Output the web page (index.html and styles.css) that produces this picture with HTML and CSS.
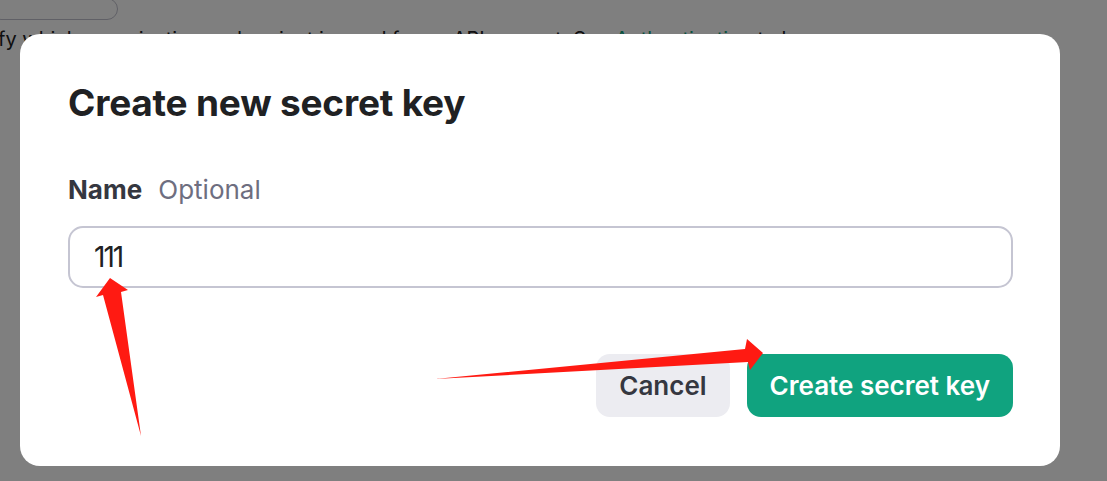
FILE: index.html
```html
<!DOCTYPE html>
<html lang="en">
<head>
<meta charset="utf-8">
<title>Create new secret key</title>
<link rel="stylesheet" href="styles.css">
</head>
<body>
<div class="page">
  <div class="box"></div>
  <p class="intro">Specify which organization and project is used for an API request. See <a class="link">Authentication</a> to learn more.</p>
</div>
<div class="overlay">
  <div class="modal">
    <h1 class="title">Create new secret key</h1>
    <div class="field">
      <label class="label">Name <span class="optional">Optional</span></label>
      <div class="input">111</div>
    </div>
    <div class="actions">
      <button class="btn btn-cancel">Cancel</button>
      <button class="btn btn-primary">Create secret key</button>
    </div>
  </div>
  <svg class="arrows" width="1107" height="481" viewBox="0 0 1107 481">
    <polygon fill="#ff1a12" points="141,436 103,295 96,297 110,278 128,290 121,292"/>
    <polygon fill="#ff1a12" points="435,379 745,349 747,339 763,353 750,370 748,362"/>
  </svg>
</div>
</body>
</html>
```
FILE: styles.css
```css
html, body {
  margin: 0;
  padding: 0;
}
body {
  width: 1107px;
  height: 481px;
  overflow: hidden;
  background: #fff;
  font-family: Inter, "Noto Sans", "Liberation Sans", sans-serif;
  color: #202123;
}
.page {
  display: flex;
  flex-direction: column;
}
.box {
  width: 126px;
  height: 20px;
  margin-left: -10px;
  margin-top: -2px;
  border: 1px solid #c0c0cc;
  border-radius: 12px;
}
.intro {
  margin: 5px 0 0 -55px;
  font-size: 20px;
  line-height: 28px;
  white-space: nowrap;
}
.link {
  color: #10a37f;
}
.overlay {
  position: fixed;
  inset: 0;
  background: rgba(0, 0, 0, 0.5);
  padding: 34px 47px 15px 20px;
  box-sizing: border-box;
  display: flex;
}
.modal {
  flex: 1;
  background: #fff;
  border-radius: 20px;
  padding: 0 47px 0 48px;
  display: flex;
  flex-direction: column;
}
.title {
  margin: 47px 0 0;
  font-size: 37px;
  line-height: 44px;
  font-weight: 700;
  letter-spacing: -0.2px;
  color: #202123;
}
.field {
  margin-top: 50px;
  display: flex;
  flex-direction: column;
}
.label {
  font-size: 26px;
  line-height: 30px;
  font-weight: 700;
  color: #353740;
}
.optional {
  margin-left: 10px;
  font-weight: 400;
  color: #6e6e80;
}
.input {
  margin-top: 21px;
  height: 58px;
  border: 2px solid #c5c5d2;
  border-radius: 15px;
  padding: 0 24px;
  display: flex;
  align-items: center;
  font-size: 28px;
  color: #202123;
  letter-spacing: -2px;
}
.actions {
  margin-top: 66px;
  display: flex;
  justify-content: flex-end;
  gap: 17px;
}
.btn {
  height: 63px;
  border: none;
  border-radius: 14px;
  font-family: inherit;
  font-size: 26px;
  font-weight: 600;
  padding: 0 23px;
}
.btn-cancel {
  background: #ececf1;
  color: #353740;
}
.btn-primary {
  background: #10a37f;
  color: #fff;
}
.arrows {
  position: absolute;
  left: 0;
  top: 0;
  pointer-events: none;
}
```
